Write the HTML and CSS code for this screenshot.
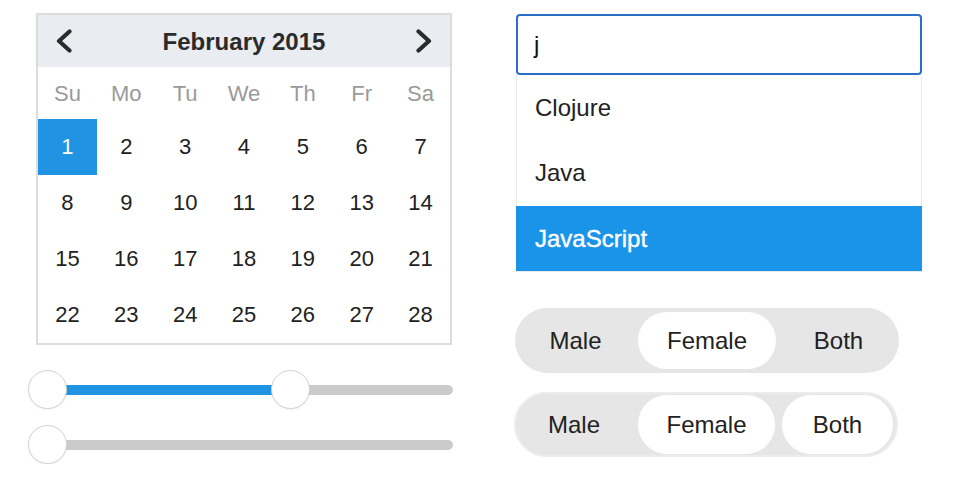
FILE: index.html
```html
<!DOCTYPE html>
<html>
<head>
<meta charset="utf-8">
<link rel="stylesheet" href="styles.css">
</head>
<body>
<div class="page">
  <div class="col-left">
    <div class="calendar">
      <div class="cal-head">
        <button class="nav" aria-label="Previous month"><svg width="18" height="24" viewBox="0 0 18 24"><polyline points="14.5,2.5 4,12 14.5,21.5" fill="none" stroke="#2b2b2b" stroke-width="4.2" stroke-linecap="round" stroke-linejoin="round"/></svg></button>
        <div class="cal-title">February 2015</div>
        <button class="nav" aria-label="Next month"><svg width="18" height="24" viewBox="0 0 18 24"><polyline points="3.5,2.5 14,12 3.5,21.5" fill="none" stroke="#2b2b2b" stroke-width="4.2" stroke-linecap="round" stroke-linejoin="round"/></svg></button>
      </div>
      <div class="cal-grid">
        <div class="dow">Su</div><div class="dow">Mo</div><div class="dow">Tu</div><div class="dow">We</div><div class="dow">Th</div><div class="dow">Fr</div><div class="dow">Sa</div>
        <div class="day selected">1</div><div class="day">2</div><div class="day">3</div><div class="day">4</div><div class="day">5</div><div class="day">6</div><div class="day">7</div>
        <div class="day">8</div><div class="day">9</div><div class="day">10</div><div class="day">11</div><div class="day">12</div><div class="day">13</div><div class="day">14</div>
        <div class="day">15</div><div class="day">16</div><div class="day">17</div><div class="day">18</div><div class="day">19</div><div class="day">20</div><div class="day">21</div>
        <div class="day">22</div><div class="day">23</div><div class="day">24</div><div class="day">25</div><div class="day">26</div><div class="day">27</div><div class="day">28</div>
      </div>
    </div>
    <div class="sliders">
      <div class="slider">
        <div class="track"><div class="fill" style="width:243px"></div></div>
        <span class="thumb" style="left:0px"></span>
        <span class="thumb" style="left:243px"></span>
      </div>
      <div class="slider">
        <div class="track"></div>
        <span class="thumb" style="left:0px"></span>
      </div>
    </div>
  </div>
  <div class="col-right">
    <div class="autocomplete">
      <div class="ac-input">j</div>
      <ul class="ac-list">
        <li class="ac-item">Clojure</li>
        <li class="ac-item ac-mid">Java</li>
        <li class="ac-item active">JavaScript</li>
      </ul>
    </div>
    <div class="toggle">
      <span class="seg">Male</span>
      <span class="seg on">Female</span>
      <span class="seg">Both</span>
    </div>
    <div class="toggle toggle-b">
      <span class="seg">Male</span>
      <span class="seg on">Female</span>
      <span class="seg on">Both</span>
    </div>
  </div>
</div>
</body>
</html>
```
FILE: styles.css
```css
* { box-sizing: border-box; }
html, body { margin: 0; padding: 0; background: #fff; }
body {
  font-family: "Liberation Sans", Arial, Helvetica, sans-serif;
  color: #222;
}
.page {
  display: flex;
  align-items: flex-start;
  padding: 13px 0 0 36px;
}
.col-left { width: 416px; }
.calendar {
  border: 2px solid #dcdcdc;
  width: 416px;
}
.cal-head {
  height: 52px;
  background: #e9ecf0;
  display: flex;
  align-items: center;
  justify-content: space-between;
  padding: 0 17px 0 17px;
}
.nav {
  border: 0;
  background: none;
  padding: 0;
  width: 18px;
  height: 24px;
  display: flex;
}
.cal-title {
  font-size: 24px;
  font-weight: bold;
  color: #2b2b2b;
  padding-top: 1px;
}
.cal-grid {
  display: grid;
  grid-template-columns: repeat(7, 1fr);
  grid-auto-rows: 56px;
  grid-template-rows: 52px;
}
.dow, .day {
  display: flex;
  align-items: center;
  justify-content: center;
  font-size: 22px;
}
.dow { color: #9a9a9a; padding-top: 1px; }
.day { color: #222; }
.day.selected {
  background: #2193e3;
  color: #fff;
}
.sliders {
  margin: 25px 0 0 -8px;
  display: flex;
  flex-direction: column;
  gap: 16px;
}
.slider {
  position: relative;
  width: 426px;
  height: 39px;
  padding-top: 15px;
}
.track {
  position: relative;
  margin-left: 19px;
  width: 406px;
  height: 10px;
  border-radius: 5px;
  background: #cbcbcb;
}
.fill {
  position: absolute;
  left: 0;
  top: 0;
  height: 10px;
  background: #2193e3;
}
.thumb {
  position: absolute;
  top: 0;
  width: 39px;
  height: 39px;
  border-radius: 50%;
  background: #fff;
  border: 1.5px solid #d2d2d2;
  box-shadow: 0 1px 2px rgba(0,0,0,0.06);
}
.col-right {
  margin-left: 62px;
  width: 410px;
  padding-top: 1px;
}
.autocomplete { margin-left: 2px; width: 406px; }
.ac-input {
  height: 61px;
  border: 2px solid #2a6ec8;
  border-radius: 4px;
  padding-left: 16px;
  font-size: 24px;
  line-height: 57px;
  color: #111;
}
.ac-list {
  list-style: none;
  margin: 0;
  padding: 0;
  border: 1px solid #e8e8e8;
  border-top: 0;
}
.ac-item {
  height: 65px;
  line-height: 65px;
  padding-left: 18px;
  font-size: 24px;
  color: #222;
}
.ac-mid { height: 66px; line-height: 66px; }
.ac-item.active {
  background: #1a94e8;
  color: #fff;
  margin: 0 -1px;
  padding-left: 19px;
  -webkit-text-stroke: 0.4px #fff;
}
.toggle {
  margin: 36px 0 0 1px;
  width: 384px;
  height: 65px;
  border-radius: 33px;
  background: #e6e6e6;
  padding: 4px;
  display: grid;
  grid-template-columns: 113px 138px 113px;
  column-gap: 6px;
}
.seg {
  display: flex;
  align-items: center;
  justify-content: center;
  font-size: 24px;
  color: #222;
  border-radius: 29px;
}
.seg.on { background: #fff; }
.toggle-b {
  margin: 19px 0 0 0;
  border: 2px solid #ececec;
  padding: 1px;
  grid-template-columns: 114px 137px 111px;
  column-gap: 7px;
}
```
